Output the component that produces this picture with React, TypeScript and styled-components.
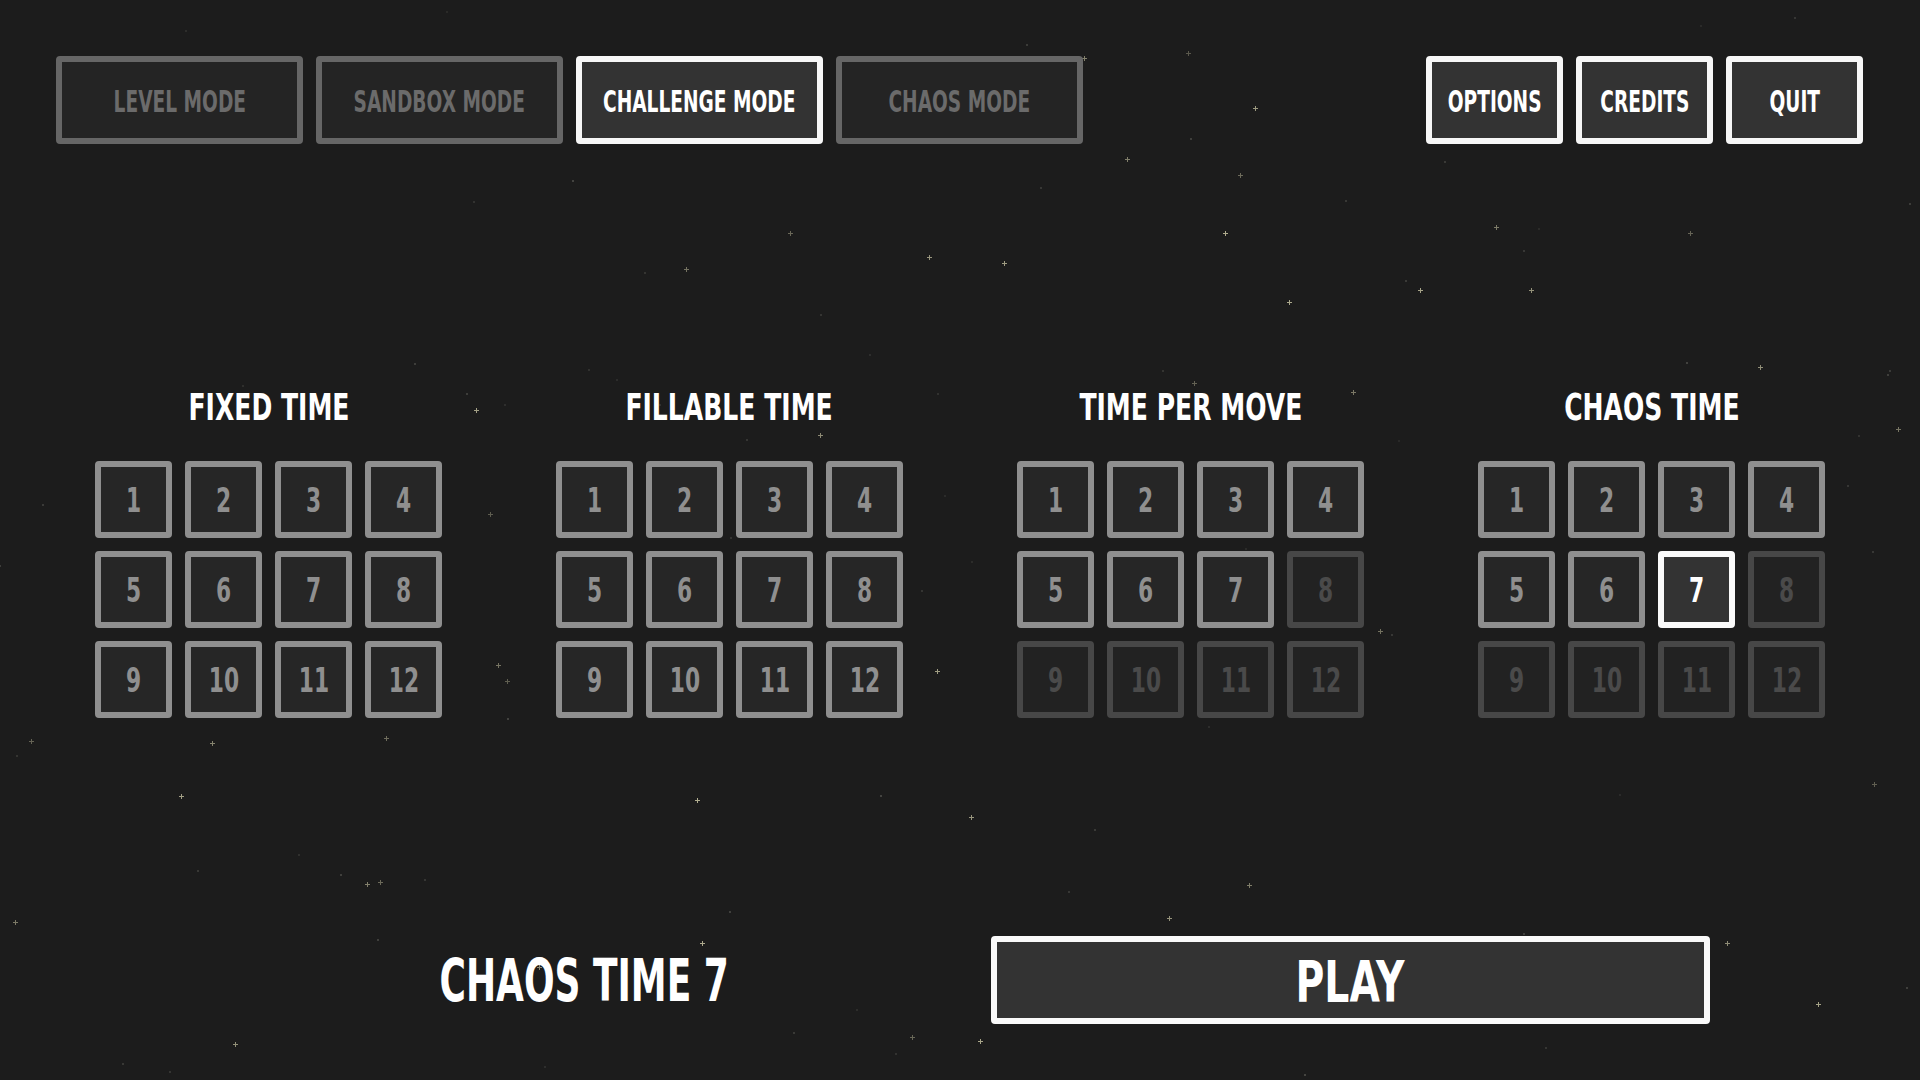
import React from "react";
import styled, { createGlobalStyle } from "styled-components";

type TileState = "normal" | "faded" | "selected";

type Mode = {
  title: string;
  faded: number[];
  selected?: number;
};

const MODES: Mode[] = [
  { title: "FIXED TIME", faded: [] },
  { title: "FILLABLE TIME", faded: [] },
  { title: "TIME PER MOVE", faded: [8, 9, 10, 11, 12] },
  { title: "CHAOS TIME", faded: [8, 9, 10, 11, 12], selected: 7 },
];

const LEVELS = [1, 2, 3, 4, 5, 6, 7, 8, 9, 10, 11, 12];

// hand placed stars (reference coords at 1920 wide), plus a seeded filler
const BRIGHT_STARS: [number, number][] = [
  [1188, 53], [1255, 108], [1084, 58], [1240, 175], [1225, 233], [929, 257],
  [1127, 159], [790, 233], [1289, 302], [1531, 290], [1496, 227], [1690, 233],
  [1420, 290], [1760, 367], [1353, 392], [1194, 383], [476, 410], [820, 435],
  [498, 665], [507, 681], [937, 671], [774, 618], [1380, 631], [1058, 653],
  [1145, 661], [212, 743], [386, 738], [697, 800], [971, 817], [367, 884],
  [380, 882], [702, 943], [1169, 918], [1249, 885], [912, 1037], [980, 1041],
  [235, 1044], [15, 922], [31, 741], [1818, 1004], [1727, 943], [1898, 429],
  [1874, 784], [181, 796], [539, 967], [686, 269], [490, 514], [1004, 263],
];

function seeded(seed: number) {
  let s = seed;
  return () => {
    s = (s * 16807) % 2147483647;
    return (s - 1) / 2147483646;
  };
}

const rand = seeded(42);
const FAINT_STARS = Array.from({ length: 90 }, () => ({
  x: Math.round(rand() * 1920),
  y: Math.round(rand() * 1080),
  o: 0.12 + rand() * 0.25,
}));

const GlobalStyle = createGlobalStyle`
  html, body {
    margin: 0;
    padding: 0;
    background: #1c1c1c;
  }
  body {
    font-family: "DejaVu Sans", "Liberation Sans", sans-serif;
    font-weight: 700;
    color: #ffffff;
  }
`;

const Screen = styled.div`
  position: relative;
  width: 1920px;
  height: 1080px;
  overflow: hidden;
  background: #1c1c1c;
  display: flex;
  flex-direction: column;
`;

const Starfield = styled.div`
  position: absolute;
  inset: 0;
  pointer-events: none;
`;

const Star = styled.div<{ $bright?: boolean }>`
  position: absolute;
  width: ${(p) => (p.$bright ? 5 : 2)}px;
  height: ${(p) => (p.$bright ? 5 : 2)}px;
  margin: -2px 0 0 -2px;

  &::before,
  &::after {
    content: "";
    position: absolute;
    background: ${(p) => (p.$bright ? "#cdc9a6" : "#8a8a80")};
  }
  &::before {
    left: ${(p) => (p.$bright ? 2 : 0)}px;
    top: 0;
    width: ${(p) => (p.$bright ? 1 : 2)}px;
    height: 100%;
  }
  &::after {
    top: ${(p) => (p.$bright ? 2 : 0)}px;
    left: 0;
    height: ${(p) => (p.$bright ? 1 : 2)}px;
    width: 100%;
  }
`;

// the game's display face is a tall condensed one; squeeze DejaVu to match
const Squeeze = styled.span<{ $x: number }>`
  display: inline-block;
  white-space: nowrap;
  transform: scaleX(${(p) => p.$x});
  transform-origin: center;
`;

const Content = styled.div`
  position: relative;
  display: flex;
  flex-direction: column;
`;

const TopBar = styled.div`
  display: flex;
  justify-content: space-between;
  padding: 56px 57px 0 56px;
`;

const ButtonGroup = styled.div<{ $gap: number }>`
  display: flex;
  gap: ${(p) => p.$gap}px;
`;

const MenuButton = styled.div<{ $width: number; $active?: boolean }>`
  box-sizing: border-box;
  width: ${(p) => p.$width}px;
  height: 88px;
  display: flex;
  align-items: center;
  justify-content: center;
  border: 6px solid ${(p) => (p.$active ? "#f7f7f7" : "#666666")};
  border-radius: 4px;
  background: ${(p) => (p.$active ? "#333333" : "#242424")};
  color: ${(p) => (p.$active ? "#ffffff" : "#6b6b6b")};
  font-size: 30px;
  padding-top: 2px;
  overflow: hidden;
`;

const Columns = styled.div`
  display: grid;
  grid-template-columns: repeat(4, 461px);
  padding: 0 38px;
  margin-top: 243px;
`;

const Column = styled.div`
  display: flex;
  flex-direction: column;
  align-items: center;
`;

const Heading = styled.div`
  font-size: 38px;
  line-height: 40px;
  color: #ffffff;
  margin-bottom: 34px;
`;

const TileGrid = styled.div`
  display: grid;
  grid-template-columns: repeat(4, 77px);
  grid-auto-rows: 77px;
  gap: 13px;
`;

const TILE_COLORS: Record<TileState, { border: string; bg: string; text: string }> = {
  normal: { border: "#8f8f8f", bg: "#262626", text: "#8f8f8f" },
  faded: { border: "#474747", bg: "#222222", text: "#4a4a4a" },
  selected: { border: "#fafafa", bg: "#333333", text: "#ffffff" },
};

const Tile = styled.div<{ $state: TileState }>`
  box-sizing: border-box;
  display: flex;
  align-items: center;
  justify-content: center;
  border: 6px solid ${(p) => TILE_COLORS[p.$state].border};
  border-radius: 4px;
  background: ${(p) => TILE_COLORS[p.$state].bg};
  color: ${(p) => TILE_COLORS[p.$state].text};
  font-size: 33px;
  padding-top: 2px;
`;

const BottomRow = styled.div`
  display: flex;
  align-items: center;
  padding-left: 198px;
  margin-top: 218px;
  gap: 21px;
`;

const Summary = styled.div`
  width: 772px;
  text-align: center;
  font-size: 59px;
  color: #ffffff;
`;

const PlayButton = styled.div`
  box-sizing: border-box;
  width: 719px;
  height: 88px;
  display: flex;
  align-items: center;
  justify-content: center;
  border: 6px solid #fafafa;
  border-radius: 4px;
  background: #333333;
  color: #ffffff;
  font-size: 57px;
  padding-top: 3px;
`;

function tileState(mode: Mode, n: number): TileState {
  if (mode.selected === n) return "selected";
  if (mode.faded.includes(n)) return "faded";
  return "normal";
}

const MODE_TABS = ["LEVEL MODE", "SANDBOX MODE", "CHALLENGE MODE", "CHAOS MODE"];
const MENU = ["OPTIONS", "CREDITS", "QUIT"];

export default function App() {
  return (
    <>
      <GlobalStyle />
      <Screen>
        <Starfield>
          {FAINT_STARS.map((s, i) => (
            <Star key={"f" + i} style={{ left: s.x, top: s.y, opacity: s.o }} />
          ))}
          {BRIGHT_STARS.map(([x, y], i) => (
            <Star
              key={"b" + i}
              $bright
              style={{ left: x, top: y, opacity: 0.35 + ((i * 37) % 50) / 100 }}
            />
          ))}
        </Starfield>
        <Content>
          <TopBar>
            <ButtonGroup $gap={13}>
              {MODE_TABS.map((t) => (
                <MenuButton key={t} $width={247} $active={t === "CHALLENGE MODE"}>
                  <Squeeze $x={0.62}>{t}</Squeeze>
                </MenuButton>
              ))}
            </ButtonGroup>
            <ButtonGroup $gap={13}>
              {MENU.map((t) => (
                <MenuButton key={t} $width={137} $active>
                  <Squeeze $x={0.62}>{t}</Squeeze>
                </MenuButton>
              ))}
            </ButtonGroup>
          </TopBar>

          <Columns>
            {MODES.map((mode) => (
              <Column key={mode.title}>
                <Heading>
                  <Squeeze $x={0.66}>{mode.title}</Squeeze>
                </Heading>
                <TileGrid>
                  {LEVELS.map((n) => (
                    <Tile key={n} $state={tileState(mode, n)}>
                      <Squeeze $x={0.66}>{n}</Squeeze>
                    </Tile>
                  ))}
                </TileGrid>
              </Column>
            ))}
          </Columns>

          <BottomRow>
            <Summary>
              <Squeeze $x={0.61}>CHAOS TIME 7</Squeeze>
            </Summary>
            <PlayButton>
              <Squeeze $x={0.69}>PLAY</Squeeze>
            </PlayButton>
          </BottomRow>
        </Content>
      </Screen>
    </>
  );
}
